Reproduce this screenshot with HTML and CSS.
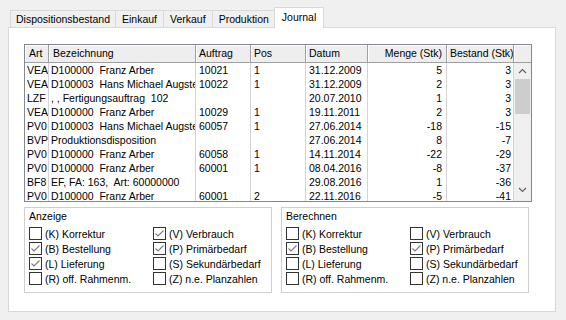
FILE: index.html
```html
<!DOCTYPE html>
<html lang="de">
<head>
    <meta charset="UTF-8">
    <title>Journal</title>
    <link rel="stylesheet" href="styles.css">
</head>
<body>
    <div class="window">
        <div class="tabs">
            <div class="tab">Dispositionsbestand</div>
            <div class="tab">Einkauf</div>
            <div class="tab">Verkauf</div>
            <div class="tab">Produktion</div>
            <div class="tab active">Journal</div>
        </div>
        <div class="page">
            <div class="listview">
                <div class="lv-main">
                    <div class="lv-row lv-head">
                        <div>Art</div>
                        <div>Bezeichnung</div>
                        <div>Auftrag</div>
                        <div>Pos</div>
                        <div>Datum</div>
                        <div class="num">Menge (Stk)</div>
                        <div class="num">Bestand (Stk)</div>
                    </div>
                    <div class="lv-body">
                        <div class="lv-row"><div>VEA</div><div>D100000&nbsp; Franz Arber</div><div>10021</div><div>1</div><div>31.12.2009</div><div class="num">5</div><div class="num">3</div></div>
                        <div class="lv-row"><div>VEA</div><div>D100003&nbsp; Hans Michael Augste</div><div>10022</div><div>1</div><div>31.12.2009</div><div class="num">2</div><div class="num">3</div></div>
                        <div class="lv-row"><div>LZF</div><div>, , Fertigungsauftrag&nbsp; 102</div><div></div><div></div><div>20.07.2010</div><div class="num">1</div><div class="num">3</div></div>
                        <div class="lv-row"><div>VEA</div><div>D100000&nbsp; Franz Arber</div><div>10029</div><div>1</div><div>19.11.2011</div><div class="num">2</div><div class="num">3</div></div>
                        <div class="lv-row"><div>PV0</div><div>D100003&nbsp; Hans Michael Augste</div><div>60057</div><div>1</div><div>27.06.2014</div><div class="num">-18</div><div class="num">-15</div></div>
                        <div class="lv-row"><div>BVP</div><div>Produktionsdisposition</div><div></div><div></div><div>27.06.2014</div><div class="num">8</div><div class="num">-7</div></div>
                        <div class="lv-row"><div>PV0</div><div>D100000&nbsp; Franz Arber</div><div>60058</div><div>1</div><div>14.11.2014</div><div class="num">-22</div><div class="num">-29</div></div>
                        <div class="lv-row"><div>PV0</div><div>D100000&nbsp; Franz Arber</div><div>60001</div><div>1</div><div>08.04.2016</div><div class="num">-8</div><div class="num">-37</div></div>
                        <div class="lv-row"><div>BF8</div><div>EF, FA: 163,&nbsp; Art: 60000000</div><div></div><div></div><div>29.08.2016</div><div class="num">1</div><div class="num">-36</div></div>
                        <div class="lv-row"><div>PV0</div><div>D100000&nbsp; Franz Arber</div><div>60001</div><div>2</div><div>22.11.2016</div><div class="num">-5</div><div class="num">-41</div></div>
                    </div>
                </div>
                <div class="vscroll">
                    <div class="vscroll-head"></div>
                    <div class="vscroll-track">
                        <svg class="arrow" width="9" height="6" viewBox="0 0 9 6"><polyline points="1,5 4.5,1.5 8,5" fill="none" stroke="#606060" stroke-width="1.2"/></svg>
                        <div class="thumb"></div>
                        <div class="spacer"></div>
                        <svg class="arrow" width="9" height="6" viewBox="0 0 9 6"><polyline points="1,1 4.5,4.5 8,1" fill="none" stroke="#606060" stroke-width="1.2"/></svg>
                    </div>
                </div>
            </div>

            <div class="groups">
                <div class="group">
                    <div class="group-title">Anzeige</div>
                    <div class="checks">
                        <label class="check"><span class="box"></span>(K) Korrektur</label>
                        <label class="check"><span class="box checked"><svg viewBox="0 0 11 11"><polyline points="1.5,5.5 4,8 9.5,2.5"/></svg></span>(V) Verbrauch</label>
                        <label class="check"><span class="box checked"><svg viewBox="0 0 11 11"><polyline points="1.5,5.5 4,8 9.5,2.5"/></svg></span>(B) Bestellung</label>
                        <label class="check"><span class="box checked"><svg viewBox="0 0 11 11"><polyline points="1.5,5.5 4,8 9.5,2.5"/></svg></span>(P) Primärbedarf</label>
                        <label class="check"><span class="box checked"><svg viewBox="0 0 11 11"><polyline points="1.5,5.5 4,8 9.5,2.5"/></svg></span>(L) Lieferung</label>
                        <label class="check"><span class="box"></span>(S) Sekundärbedarf</label>
                        <label class="check"><span class="box"></span>(R) off. Rahmenm.</label>
                        <label class="check"><span class="box"></span>(Z) n.e. Planzahlen</label>
                    </div>
                </div>
                <div class="group">
                    <div class="group-title">Berechnen</div>
                    <div class="checks">
                        <label class="check"><span class="box"></span>(K) Korrektur</label>
                        <label class="check"><span class="box"></span>(V) Verbrauch</label>
                        <label class="check"><span class="box checked"><svg viewBox="0 0 11 11"><polyline points="1.5,5.5 4,8 9.5,2.5"/></svg></span>(B) Bestellung</label>
                        <label class="check"><span class="box checked"><svg viewBox="0 0 11 11"><polyline points="1.5,5.5 4,8 9.5,2.5"/></svg></span>(P) Primärbedarf</label>
                        <label class="check"><span class="box"></span>(L) Lieferung</label>
                        <label class="check"><span class="box"></span>(S) Sekundärbedarf</label>
                        <label class="check"><span class="box"></span>(R) off. Rahmenm.</label>
                        <label class="check"><span class="box"></span>(Z) n.e. Planzahlen</label>
                    </div>
                </div>
            </div>
        </div>
    </div>
</body>
</html>
```
FILE: styles.css
```css
body {
    margin: 0;
    background-color: #f0f0f0;
    font-family: "Liberation Sans", Arial, sans-serif;
    font-size: 10.5px;
    color: #000;
}
.window {
    padding: 7px 10px 0 8px;
}
.tabs {
    display: flex;
    align-items: flex-end;
    padding-left: 2px;
    margin-bottom: -1px;
}
.tab {
    box-sizing: border-box;
    height: 17px;
    line-height: 16px;
    padding: 0 6px;
    margin-bottom: 1px;
    margin-left: -1px;
    border: 1px solid #d9d9d9;
    border-bottom: none;
    background-color: #f0f0f0;
    white-space: nowrap;
}
.tab:first-child {
    margin-left: 0;
    padding: 0 5px;
}
.tab.active {
    position: relative;
    z-index: 1;
    height: 21px;
    line-height: 19px;
    margin: 0 -2px 0 -2px;
    padding: 0 7px;
    background-color: #fff;
}
.page {
    box-sizing: border-box;
    height: 285px;
    padding: 16px 0 0 15px;
    border: 1px solid #d9d9d9;
    background-color: #fff;
}

/* list view */
.listview {
    display: flex;
    width: 506px;
    height: 156px;
    border: 1px solid #828790;
    overflow: hidden;
}
.lv-main {
    width: 489px;
}
.lv-row {
    display: grid;
    grid-template-columns: 24px 147px 55px 55px 62px 79px 67px;
    height: 14px;
    line-height: 14px;
}
.lv-row > div {
    box-sizing: border-box;
    padding: 0 2px 0 3px;
    border-right: 1px solid #d4d4d4;
    white-space: nowrap;
    overflow: hidden;
}
.lv-row > div:first-child {
    padding: 0 0 0 2px;
}
.lv-row > div:nth-child(2) {
    padding-left: 2px;
}
.lv-row > .num {
    text-align: right;
    padding-right: 4px;
}
.lv-row > div:last-child.num {
    padding-right: 2px;
}
.lv-head {
    height: 18px;
    line-height: 16px;
}
.lv-head > div {
    background-color: #eeeeee;
    border-right: 1px solid #a0a0a0;
    border-bottom: 1px solid #a0a0a0;
    box-shadow: inset 1px 1px 0 #fff;
}
.lv-head > div:first-child,
.lv-head > div:nth-child(2) {
    padding-left: 4px;
}
.vscroll {
    width: 17px;
    display: flex;
    flex-direction: column;
}
.vscroll-head {
    box-sizing: border-box;
    height: 18px;
    background-color: #eeeeee;
    border-bottom: 1px solid #a0a0a0;
    box-shadow: inset 1px 1px 0 #fff;
}
.vscroll-track {
    flex: 1;
    display: flex;
    flex-direction: column;
    align-items: center;
    background-color: #f0f0f0;
    padding-top: 5px;
}
.arrow {
    display: block;
    flex: none;
}
.thumb {
    width: 15px;
    height: 35px;
    margin-top: 5px;
    background-color: #cdcdcd;
}
.spacer {
    height: 73px;
}

/* option groups */
.groups {
    display: flex;
    gap: 9px;
    width: 505px;
    margin-top: 5px;
}
.group {
    flex: 1;
    height: 86px;
    box-sizing: border-box;
    padding: 1px 4px 0 4px;
    border: 1px solid #cfcfcf;
}
.group-title {
    line-height: 14px;
    margin-bottom: 3px;
}
.checks {
    display: grid;
    grid-template-columns: 124px 1fr;
}
.check {
    display: flex;
    align-items: center;
    height: 15px;
    white-space: nowrap;
}
.box {
    box-sizing: border-box;
    width: 13px;
    height: 13px;
    margin-right: 3px;
    border: 1px solid #333;
    background-color: #fff;
}
.box svg {
    display: block;
    width: 11px;
    height: 11px;
    fill: none;
    stroke: #7a7a7a;
    stroke-width: 1.1;
}
```
